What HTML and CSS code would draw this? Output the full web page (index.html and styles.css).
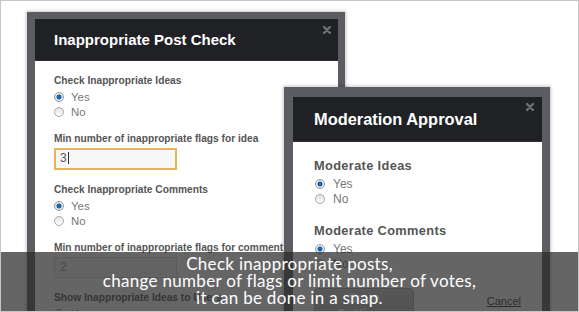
FILE: index.html
```html
<!DOCTYPE html>
<html lang="en">
<head>
    <meta charset="UTF-8">
    <meta name="viewport" content="width=device-width, initial-scale=1.0">
    <title>Moderation Settings</title>
    <link rel="stylesheet" href="styles.css">
</head>
<body>
    <div class="stage">

        <!-- Inappropriate Post Check dialog -->
        <div class="dialog dialog-check">
            <div class="dialog-head">
                <h2>Inappropriate Post Check</h2>
                <span class="close">
                    <svg width="8" height="8" viewBox="0 0 8 8"><path d="M1 1 L7 7 M7 1 L1 7" stroke="currentColor" stroke-width="2.4" stroke-linecap="round"/></svg>
                </span>
            </div>
            <div class="dialog-body">
                <div class="field">
                    <span class="field-label">Check Inappropriate Ideas</span>
                    <div class="radio-row"><span class="radio checked"></span>Yes</div>
                    <div class="radio-row"><span class="radio"></span>No</div>
                </div>
                <div class="field">
                    <span class="field-label">Min number of inappropriate flags for idea</span>
                    <div class="text-input focused">3<span class="caret"></span></div>
                </div>
                <div class="field">
                    <span class="field-label">Check Inappropriate Comments</span>
                    <div class="radio-row"><span class="radio checked"></span>Yes</div>
                    <div class="radio-row"><span class="radio"></span>No</div>
                </div>
                <div class="field">
                    <span class="field-label">Min number of inappropriate flags for comment</span>
                    <div class="text-input muted">2</div>
                </div>
                <div class="field">
                    <span class="field-label">Show Inappropriate Ideas to Users</span>
                    <div class="radio-row"><span class="radio checked"></span>Yes</div>
                    <div class="radio-row"><span class="radio"></span>No</div>
                </div>
            </div>
        </div>

        <!-- Moderation Approval dialog -->
        <div class="dialog dialog-moderation">
            <div class="dialog-head">
                <h2>Moderation Approval</h2>
                <span class="close">
                    <svg width="8" height="8" viewBox="0 0 8 8"><path d="M1 1 L7 7 M7 1 L1 7" stroke="currentColor" stroke-width="2.4" stroke-linecap="round"/></svg>
                </span>
            </div>
            <div class="dialog-body">
                <div class="field">
                    <span class="field-label">Moderate Ideas</span>
                    <div class="radio-row"><span class="radio checked"></span>Yes</div>
                    <div class="radio-row"><span class="radio"></span>No</div>
                </div>
                <div class="field">
                    <span class="field-label">Moderate Comments</span>
                    <div class="radio-row"><span class="radio checked"></span>Yes</div>
                    <div class="radio-row"><span class="radio"></span>No</div>
                </div>
                <div class="actions">
                    <button class="save-btn">Save Settings</button>
                    <a href="#" class="cancel-link">Cancel</a>
                </div>
            </div>
        </div>

        <!-- Caption -->
        <div class="caption">
            Check inappropriate posts,<br>
            change number of flags or limit number of votes,<br>
            it can be done in a snap.
        </div>
    </div>
</body>
</html>
```

FILE: styles.css
```css
/* Basic Styles */
* {
    box-sizing: border-box;
}

body {
    margin: 0;
    font-family: "Liberation Sans", Arial, sans-serif;
    background: #fff;
}

.stage {
    position: relative;
    width: 579px;
    height: 312px;
    overflow: hidden;
    border: 1px solid #c6c6c6;
    background: #fff;
}

/* Dialog windows */
.dialog {
    position: absolute;
    background: #5c5d62;
    box-shadow: 0 0 3px 1px rgba(0, 0, 0, 0.22);
}

.dialog-check {
    left: 26px;
    top: 11px;
    width: 318px;
    height: 330px;
    padding: 7px 7px 0 8px;
}

.dialog-moderation {
    left: 283px;
    top: 86px;
    width: 266px;
    height: 260px;
    padding: 10px 8px 0 9px;
}

.dialog-head {
    position: relative;
    display: flex;
    align-items: center;
    height: 42px;
    padding-left: 19px;
    background: #1f2125;
    border-bottom: 1px solid #2e3035;
}

.dialog-moderation .dialog-head {
    height: 45px;
    padding-left: 21px;
}

.dialog-head h2 {
    margin: 0;
    color: #fff;
    font-size: 15px;
    font-weight: bold;
}

.dialog-moderation .dialog-head h2 {
    font-size: 16.4px;
}

.close {
    position: absolute;
    top: 7px;
    right: 7px;
    color: #6f7075;
    line-height: 0;
}

.dialog-moderation .close {
    top: 6px;
    right: 8px;
}

.dialog-body {
    background: #fff;
    height: 100%;
    padding: 13px 19px 0 19px;
}

.dialog-moderation .dialog-body {
    padding: 16px 21px 0 21px;
}

/* Fields */
.field {
    margin-bottom: 13px;
}

.dialog-moderation .field {
    margin-bottom: 17px;
}

.field-label {
    display: block;
    font-size: 10.2px;
    font-weight: bold;
    line-height: 14px;
    color: #555;
    margin-bottom: 1px;
    white-space: nowrap;
}

.dialog-moderation .field-label {
    font-size: 12.8px;
    letter-spacing: 0.35px;
    line-height: 15px;
    margin-bottom: 3px;
}

.radio-row {
    display: flex;
    align-items: center;
    height: 15px;
    font-size: 11.4px;
    color: #777;
}

.dialog-moderation .radio-row {
    font-size: 12px;
}

.radio {
    width: 10px;
    height: 10px;
    margin: 0 7px 0 0;
    border-radius: 50%;
    border: 1px solid #a9a9a9;
    background: linear-gradient(#e4e4e4, #fdfdfd);
}

.dialog-moderation .radio {
    margin: 0 8px 0 1px;
}

.radio.checked {
    border-color: #8e9aa6;
    background: radial-gradient(circle, #1d75c2 0, #1a5f9c 2.2px, #dfe6ec 2.8px, #f4f4f4 100%);
}

.text-input {
    width: 123px;
    height: 21px;
    margin-top: 2px;
    padding-left: 5px;
    font-size: 12px;
    line-height: 19px;
    color: #555;
    background: #f7f7f7;
    border: 1px solid #d6d6d6;
}

.text-input.focused {
    border: 2px solid #e6b656;
    padding-left: 4px;
    line-height: 17px;
    height: 22px;
}

.text-input.muted {
    color: #999;
}

.caret {
    display: inline-block;
    width: 1px;
    height: 12px;
    margin-left: 1px;
    vertical-align: -2px;
    background: #333;
}

/* Footer actions */
.actions {
    display: flex;
    justify-content: space-between;
    align-items: flex-start;
    padding-top: 0;
}

.save-btn {
    width: 100px;
    height: 28px;
    border: 1px solid #a8a8a8;
    border-radius: 4px;
    background: linear-gradient(#cfcfcf, #b5b5b5);
    color: #fff;
    font-family: "Liberation Sans", Arial, sans-serif;
    font-size: 14px;
    font-weight: bold;
}

.cancel-link {
    margin-top: 7px;
    font-size: 11px;
    color: #333;
    text-decoration: underline;
}

/* Caption band */
.caption {
    position: absolute;
    left: -1px;
    right: -1px;
    top: 251px;
    height: 62px;
    padding-top: 3px;
    background: rgba(42, 42, 42, 0.72);
    color: #fff;
    text-align: center;
    font-family: Lato, "Open Sans", sans-serif;
    font-size: 17px;
    line-height: 17px;
    letter-spacing: 0.3px;
}
```
